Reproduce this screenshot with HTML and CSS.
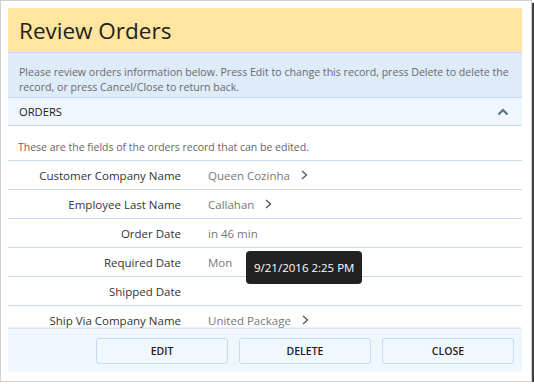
FILE: index.html
```html
<!DOCTYPE html>
<html lang="en">
<head>
    <meta charset="UTF-8">
    <title>Review Orders</title>
    <link rel="stylesheet" href="styles.css">
</head>
<body>

<div class="frame">
    <div class="panel">
        <div class="title">Review Orders</div>

        <div class="description">
            Please review orders information below. Press Edit to change this record, press Delete to delete the
            record, or press Cancel/Close to return back.
        </div>

        <div class="section">
            <span>ORDERS</span>
            <svg class="collapse" width="12" height="8" viewBox="0 0 12 8">
                <path d="M1.5 6.5 L6 2 L10.5 6.5" fill="none" stroke="#5a7088" stroke-width="2.2"/>
            </svg>
        </div>

        <div class="fields">
            <div class="hint">These are the fields of the orders record that can be edited.</div>

            <div class="row">
                <div class="label">Customer Company Name</div>
                <div class="value">Queen Cozinha<svg class="more" width="7" height="10" viewBox="0 0 7 10"><path d="M1 1 L5.5 5 L1 9" fill="none" stroke="#555" stroke-width="1.3"/></svg></div>
            </div>
            <div class="row">
                <div class="label">Employee Last Name</div>
                <div class="value">Callahan<svg class="more" width="7" height="10" viewBox="0 0 7 10"><path d="M1 1 L5.5 5 L1 9" fill="none" stroke="#555" stroke-width="1.3"/></svg></div>
            </div>
            <div class="row">
                <div class="label">Order Date</div>
                <div class="value">in 46 min</div>
            </div>
            <div class="row">
                <div class="label">Required Date</div>
                <div class="value">Mon</div>
            </div>
            <div class="row">
                <div class="label">Shipped Date</div>
                <div class="value"></div>
            </div>
            <div class="row">
                <div class="label">Ship Via Company Name</div>
                <div class="value">United Package<svg class="more" width="7" height="10" viewBox="0 0 7 10"><path d="M1 1 L5.5 5 L1 9" fill="none" stroke="#555" stroke-width="1.3"/></svg></div>
            </div>
        </div>

        <div class="toolbar">
            <button type="button">EDIT</button>
            <button type="button">DELETE</button>
            <button type="button">CLOSE</button>
        </div>

        <div class="tooltip">9/21/2016 2:25 PM</div>
    </div>
</div>

</body>
</html>
```

FILE: styles.css
```css
body {
    margin: 0;
    background-color: #fff;
    font-family: 'Open Sans', 'Noto Sans', sans-serif;
}

.frame {
    width: 516px;
    height: 366px;
    padding: 7px;
    border: 1px solid #d0d0d0;
    background-color: #fff;
    box-shadow: 3px 3px 1px rgba(0, 0, 0, 0.75);
}

.panel {
    position: relative;
    width: 514px;
    height: 364px;
    display: flex;
    flex-direction: column;
    overflow: hidden;
}

.title {
    height: 44px;
    flex-shrink: 0;
    display: flex;
    align-items: center;
    padding-left: 11px;
    background-color: #ffe59d;
    color: #222;
    font-size: 22.5px;
}

.description {
    flex-shrink: 0;
    padding: 12px 11px 1px;
    height: 31px;
    border-top: 1px solid #c3dbf3;
    background-color: #deebf9;
    color: #6a6a6a;
    font-size: 10.6px;
    line-height: 15px;
}

.section {
    flex-shrink: 0;
    height: 27px;
    display: flex;
    align-items: center;
    justify-content: space-between;
    padding: 0 13px 0 11px;
    border-top: 1px solid #c3dbf3;
    border-bottom: 1px solid #c3dbf3;
    background-color: #eff6fe;
    color: #222;
    font-size: 11.2px;
}

.fields {
    flex: 1;
    overflow: hidden;
}

.hint {
    padding: 14px 10px 6px;
    color: #666;
    font-size: 10.5px;
    line-height: 14px;
}

.row {
    display: flex;
    align-items: center;
    height: 28px;
    border-top: 1px solid #c3dbf3;
    font-size: 11.5px;
}

.label {
    width: 173px;
    text-align: right;
    color: #333;
}

.value {
    display: flex;
    align-items: center;
    margin-left: 27px;
    color: #777;
}

.more {
    margin-left: 11px;
}

.toolbar {
    flex-shrink: 0;
    height: 43px;
    display: flex;
    align-items: center;
    justify-content: flex-end;
    gap: 11px;
    padding-right: 8px;
    background-color: #eff6fe;
    box-shadow: 0 -1px 2px rgba(160, 190, 220, 0.6);
}

button {
    width: 132px;
    height: 26px;
    padding: 0;
    border: 1px solid #c3dbf3;
    border-radius: 3px;
    background-color: #f1f7ff;
    color: #222;
    font-family: inherit;
    font-size: 10.5px;
    line-height: 24px;
    font-weight: 600;
    cursor: pointer;
}

.tooltip {
    position: absolute;
    left: 238px;
    top: 243px;
    padding: 0 8px;
    height: 33px;
    line-height: 33px;
    border-radius: 4px;
    background-color: #222;
    color: #fff;
    font-size: 11.5px;
}
```
